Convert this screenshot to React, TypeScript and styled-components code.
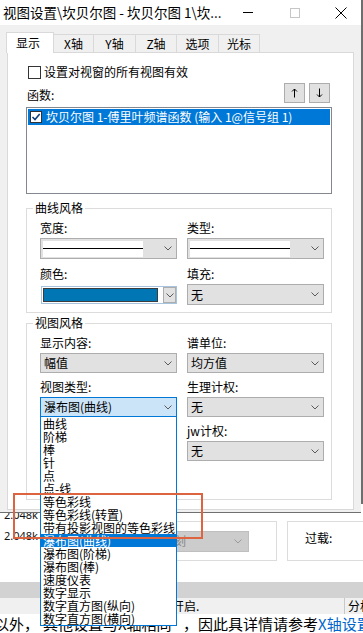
import React from 'react';
import styled, { createGlobalStyle } from 'styled-components';

const GlobalStyle = createGlobalStyle`
  html, body {
    margin: 0;
    padding: 0;
  }
  body {
    background: #6e6e6e;
    font-family: "Noto Sans CJK SC", "Noto Sans", sans-serif;
    font-size: 12px;
    color: #000;
  }
  *, *::before, *::after {
    box-sizing: border-box;
  }
`;

const tabs = [
  { label: '显示', w: 48, active: true },
  { label: 'X轴', w: 41 },
  { label: 'Y轴', w: 43 },
  { label: 'Z轴', w: 42 },
  { label: '选项', w: 43 },
  { label: '光标', w: 42 },
];

const viewTypes = [
  '曲线', '阶梯', '棒', '针', '点', '点-线', '等色彩线', '等色彩线(转置)',
  '带有投影视图的等色彩线', '瀑布图(曲线)', '瀑布图(阶梯)', '瀑布图(棒)',
  '速度仪表', '数字显示', '数字直方图(纵向)', '数字直方图(横向)',
];

const Screen = styled.div`
  position: relative;
  width: 363px;
  height: 633px;
  overflow: hidden;
  background: #6e6e6e;
`;

const Dialog = styled.div`
  position: relative;
  z-index: 2;
  width: 361px;
  height: 513px;
  background: #f0f0f0;
  border-bottom: 1px solid #6f6f6f;
  display: flex;
  flex-direction: column;
`;

const TitleBar = styled.div`
  flex: 0 0 25px;
  background: #fff;
  display: flex;
  align-items: center;
`;

const TitleText = styled.div`
  flex: 1;
  padding-left: 3px;
  font-size: 13.5px;
  line-height: 25px;
  white-space: nowrap;
  overflow: hidden;
`;

const WinBtn = styled.div<{ $w: number; $pl?: number }>`
  flex: 0 0 ${p => p.$w}px;
  height: 25px;
  padding-left: ${p => p.$pl ?? 0}px;
  display: flex;
  align-items: center;
  justify-content: center;
`;

const Body = styled.div`
  flex: 1;
  padding: 7px 0 0 6px;
  display: flex;
  flex-direction: column;
`;

const TabBar = styled.div`
  position: relative;
  z-index: 1;
  height: 20px;
  display: flex;
  align-items: flex-end;
`;

const Tab = styled.div<{ $w: number; $active?: boolean }>`
  width: ${p => p.$w}px;
  height: ${p => (p.$active ? 21 : 18)}px;
  margin-bottom: ${p => (p.$active ? -1 : 0)}px;
  border: 1px solid #d9d9d9;
  border-bottom: none;
  background: ${p => (p.$active ? '#fff' : '#f0f0f0')};
  display: flex;
  align-items: center;
  justify-content: center;
  padding-right: ${p => (p.$active ? 4 : 0)}px;
  line-height: 16px;
  & + & {
    margin-left: -1px;
  }
`;

const Panel = styled.div`
  margin-left: 1px;
  width: 347px;
  height: 458px;
  background: #fff;
  border: 1px solid #d9d9d9;
  padding: 11px 21px 0 18px;
  display: flex;
  flex-direction: column;
`;

const CheckRow = styled.div`
  height: 16px;
  padding-left: 2px;
  display: flex;
  align-items: center;
  gap: 3px;
  line-height: 16px;
`;

const CheckBox = styled.span<{ $size: number }>`
  flex: 0 0 ${p => p.$size}px;
  width: ${p => p.$size}px;
  height: ${p => p.$size}px;
  border: 1px solid #333;
  background: #fff;
  display: inline-flex;
  align-items: center;
  justify-content: center;
`;

const FuncRow = styled.div`
  margin-top: 3px;
  height: 20px;
  padding: 0 2px 0 1px;
  display: flex;
  align-items: center;
  gap: 4px;
`;

const FuncLabel = styled.span`
  flex: 1;
  padding-top: 3px;
  line-height: 16px;
`;

const ArrowBtn = styled.div`
  width: 21px;
  height: 20px;
  background: #e1e1e1;
  border: 1px solid #adadad;
  display: flex;
  align-items: center;
  justify-content: center;
`;

const ListBox = styled.div`
  margin-top: 4px;
  height: 87px;
  border: 1px solid #828790;
  padding: 1px;
  background: #fff;
`;

const ListRow = styled.div`
  height: 16px;
  padding-left: 2px;
  background: #0078d7;
  color: #fff;
  display: flex;
  align-items: center;
  gap: 4px;
  line-height: 16px;
  white-space: nowrap;
`;

const Group = styled.fieldset<{ $mt: number; $pb: number }>`
  margin: ${p => p.$mt}px 0 0;
  padding: 4px 7px ${p => p.$pb}px 6px;
  border: 1px solid #dcdcdc;
  min-width: 0;
`;

const GroupTitle = styled.legend`
  padding: 0 2px;
  line-height: 16px;
  font-size: 12px;
`;

const FieldGrid = styled.div<{ $rowGap: number }>`
  margin-left: 7px;
  display: grid;
  grid-template-columns: 137px 137px;
  column-gap: 10px;
  row-gap: ${p => p.$rowGap}px;
`;

const Field = styled.div`
  display: flex;
  flex-direction: column;
`;

const FieldLabel = styled.div`
  height: 16px;
  margin-bottom: 2px;
  line-height: 16px;
  white-space: nowrap;
`;

const Combo = styled.div<{ $h?: number; $open?: boolean }>`
  position: relative;
  height: ${p => p.$h ?? 20}px;
  border: 1px solid ${p => (p.$open ? '#0078d7' : '#adadad')};
  background: ${p => (p.$open ? '#cce4f7' : '#e1e1e1')};
  padding: 0 4px 0 3px;
  display: flex;
  align-items: center;
  line-height: 16px;
`;

const ComboText = styled.span`
  flex: 1;
  white-space: nowrap;
`;

const LineSample = styled.span`
  flex: 0 0 100px;
  height: 16px;
  margin: 0 auto 0 -1px;
  background: #fff;
  display: flex;
  align-items: center;
  &::after {
    content: '';
    display: block;
    width: 100%;
    height: 1px;
    background: #000;
  }
`;

const ColorCombo = styled.div`
  height: 18px;
  margin: 2px 0 0 1px;
  border: 1px solid #a6c3e0;
  background: #fff;
  padding-left: 1px;
  display: flex;
  gap: 5px;
`;

const Swatch = styled.span<{ $color: string }>`
  flex: 0 0 115px;
  margin: 1px 0;
  border: 1px solid #3c3c3c;
  background: ${p => p.$color};
`;

const SmallDrop = styled.span`
  flex: 0 0 13px;
  border: 1px solid #adadad;
  background: #e1e1e1;
  display: flex;
  align-items: center;
  justify-content: center;
`;

const DropList = styled.ul`
  position: absolute;
  top: 100%;
  left: -1px;
  z-index: 5;
  width: 137px;
  margin: 0;
  padding: 0;
  list-style: none;
  background: #fff;
  border: 1px solid #0078d7;
`;

const DropItem = styled.li<{ $sel?: boolean }>`
  height: 13px;
  padding-left: 2px;
  line-height: 13px;
  white-space: nowrap;
  background: ${p => (p.$sel ? '#0078d7' : 'transparent')};
  color: ${p => (p.$sel ? '#fff' : '#000')};
`;

const Annotation = styled.div`
  position: absolute;
  z-index: 10;
  left: 13px;
  top: 493px;
  width: 190px;
  height: 46px;
  border: 2px solid #dd6440;
  pointer-events: none;
`;

/* window behind the dialog */
const Backdrop = styled.div`
  margin-top: -9px;
  background: #fff;
  display: flex;
  flex-direction: column;
`;

const DataArea = styled.div`
  height: 78px;
  display: flex;
  align-items: flex-start;
`;

const ValueCol = styled.div`
  flex: 0 0 100px;
  padding-left: 4px;
  font-family: "Noto Sans", sans-serif;
  font-size: 11px;
  color: #111;
`;

const ValueRow = styled.div`
  height: 21px;
  line-height: 21px;
`;

const Frame = styled.div<{ $w: number; $ml: number; $pl: number }>`
  flex: 0 0 ${p => p.$w}px;
  margin: 17px 0 0 ${p => p.$ml}px;
  height: 40px;
  border: 1px solid #dcdcdc;
  padding-left: ${p => p.$pl}px;
  display: flex;
  align-items: center;
  line-height: 16px;
`;

const FrameLabel = styled.span`
  padding-bottom: 6px;
`;

const DisabledSelect = styled.div`
  width: 139px;
  height: 21px;
  border: 1px solid #bfbfbf;
  background: #cccccc;
  color: #8a8a8a;
  padding: 0 6px 0 3px;
  display: flex;
  align-items: center;
  white-space: nowrap;
`;

const GrayBand = styled.div`
  height: 16px;
  background: #d2d2d2;
`;

const StatusRow = styled.div`
  height: 16px;
  background: #f0f0f0;
  display: flex;
  line-height: 16px;
  white-space: nowrap;
`;

const StatusText = styled.div`
  flex: 0 0 344px;
  padding-left: 52px;
  overflow: hidden;
`;

const StatusSep = styled.div`
  flex: 0 0 1px;
  background: #c8c8c8;
`;

const StatusTail = styled.div`
  flex: 0 0 auto;
  padding-left: 3px;
`;

const HelpLine = styled.div`
  height: 19px;
  margin-left: -6px;
  font-size: 15px;
  line-height: 19px;
  white-space: nowrap;
`;

const HiddenPart = styled.span`
  display: inline-block;
  width: 144px;
  padding-left: 4px;
  overflow: hidden;
  vertical-align: top;
`;

const HelpLink = styled.span`
  color: #0066cc;
`;

function Chevron({ color = '#5a5a5a' }: { color?: string }) {
  return (
    <svg width="8" height="5" viewBox="0 0 8 5">
      <path d="M0.5 0.5 L4 4 L7.5 0.5" fill="none" stroke={color} strokeWidth="1" />
    </svg>
  );
}

function Check({ color, size }: { color: string; size: number }) {
  return (
    <svg width={size} height={size} viewBox="0 0 10 10">
      <path d="M1.5 5 L4 7.5 L8.7 2" fill="none" stroke={color} strokeWidth="1.6" />
    </svg>
  );
}

function App() {
  return (
    <>
      <GlobalStyle />
      <Screen>
        <Dialog>
          <TitleBar>
            <TitleText>视图设置\坎贝尔图 - 坎贝尔图 1\坎...</TitleText>
            <WinBtn $w={47}>
              <svg width="10" height="1"><rect width="10" height="1" fill="#000" /></svg>
            </WinBtn>
            <WinBtn $w={47}>
              <svg width="10" height="10">
                <rect x="0.5" y="0.5" width="9" height="9" fill="none" stroke="#c6c6c6" />
              </svg>
            </WinBtn>
            <WinBtn $w={43} $pl={3}>
              <svg width="12" height="12">
                <path d="M0.5 0.5 L11.5 11.5 M11.5 0.5 L0.5 11.5" stroke="#000" strokeWidth="1" />
              </svg>
            </WinBtn>
          </TitleBar>

          <Body>
            <TabBar>
              {tabs.map(t => (
                <Tab key={t.label} $w={t.w} $active={t.active}>{t.label}</Tab>
              ))}
            </TabBar>

            <Panel>
              <CheckRow>
                <CheckBox $size={13} />
                设置对视窗的所有视图有效
              </CheckRow>

              <FuncRow>
                <FuncLabel>函数:</FuncLabel>
                <ArrowBtn>
                  <svg width="7" height="10" viewBox="0 0 7 10">
                    <path d="M3.5 9.5 V1 M1 3.5 L3.5 1 L6 3.5" fill="none" stroke="#000" strokeWidth="1" />
                  </svg>
                </ArrowBtn>
                <ArrowBtn>
                  <svg width="7" height="10" viewBox="0 0 7 10">
                    <path d="M3.5 0.5 V9 M1 6.5 L3.5 9 L6 6.5" fill="none" stroke="#000" strokeWidth="1" />
                  </svg>
                </ArrowBtn>
              </FuncRow>

              <ListBox>
                <ListRow>
                  <CheckBox $size={12}>
                    <Check color="#0f3e78" size={10} />
                  </CheckBox>
                  坎贝尔图 1-傅里叶频谱函数 (输入 1@信号组 1)
                </ListRow>
              </ListBox>

              <Group $mt={6} $pb={7}>
                <GroupTitle>曲线风格</GroupTitle>
                <FieldGrid $rowGap={7}>
                  <Field>
                    <FieldLabel>宽度:</FieldLabel>
                    <Combo $h={21}>
                      <LineSample />
                      <Chevron />
                    </Combo>
                  </Field>
                  <Field>
                    <FieldLabel>类型:</FieldLabel>
                    <Combo $h={21}>
                      <LineSample />
                      <Chevron />
                    </Combo>
                  </Field>
                  <Field>
                    <FieldLabel>颜色:</FieldLabel>
                    <ColorCombo>
                      <Swatch $color="#0077b4" />
                      <SmallDrop><Chevron /></SmallDrop>
                    </ColorCombo>
                  </Field>
                  <Field>
                    <FieldLabel>填充:</FieldLabel>
                    <Combo $h={21}>
                      <ComboText>无</ComboText>
                      <Chevron />
                    </Combo>
                  </Field>
                </FieldGrid>
              </Group>

              <Group $mt={2} $pb={38}>
                <GroupTitle>视图风格</GroupTitle>
                <FieldGrid $rowGap={6}>
                  <Field>
                    <FieldLabel>显示内容:</FieldLabel>
                    <Combo>
                      <ComboText>幅值</ComboText>
                      <Chevron />
                    </Combo>
                  </Field>
                  <Field>
                    <FieldLabel>谱单位:</FieldLabel>
                    <Combo>
                      <ComboText>均方值</ComboText>
                      <Chevron />
                    </Combo>
                  </Field>
                  <Field>
                    <FieldLabel>视图类型:</FieldLabel>
                    <Combo $open>
                      <ComboText>瀑布图(曲线)</ComboText>
                      <Chevron />
                      <DropList>
                        {viewTypes.map(v => (
                          <DropItem key={v} $sel={v === '瀑布图(曲线)'}>{v}</DropItem>
                        ))}
                      </DropList>
                    </Combo>
                  </Field>
                  <Field>
                    <FieldLabel>生理计权:</FieldLabel>
                    <Combo>
                      <ComboText>无</ComboText>
                      <Chevron />
                    </Combo>
                  </Field>
                  <Field />
                  <Field>
                    <FieldLabel>jw计权:</FieldLabel>
                    <Combo>
                      <ComboText>无</ComboText>
                      <Chevron />
                    </Combo>
                  </Field>
                </FieldGrid>
              </Group>
            </Panel>
          </Body>
        </Dialog>

        <Backdrop>
          <DataArea>
            <ValueCol>
              <ValueRow>2.048k</ValueRow>
              <ValueRow>2.048k</ValueRow>
            </ValueCol>
            <Frame $w={177} $ml={0} $pl={9}>
              <DisabledSelect>
                <ComboText>转速和时间刻</ComboText>
                <Chevron color="#9a9a9a" />
              </DisabledSelect>
            </Frame>
            <Frame $w={90} $ml={10} $pl={17}>
              <FrameLabel>过载:</FrameLabel>
            </Frame>
          </DataArea>
          <GrayBand />
          <StatusRow>
            <StatusText>此设置将在下次打开时开启.</StatusText>
            <StatusSep />
            <StatusTail>分析</StatusTail>
          </StatusRow>
          <HelpLine>
            以外，<HiddenPart>其他设置与X轴相同</HiddenPart>，因此具详情请参考<HelpLink>X轴设置</HelpLink>
          </HelpLine>
        </Backdrop>

        <Annotation />
      </Screen>
    </>
  );
}

export default App;
